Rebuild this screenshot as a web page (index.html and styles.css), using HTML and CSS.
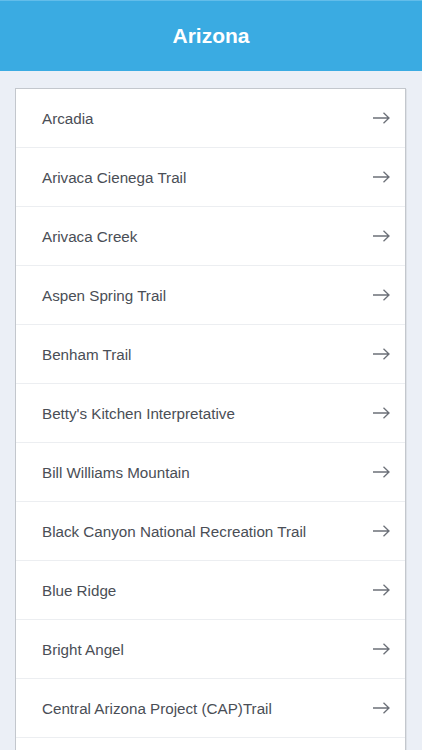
FILE: index.html
```html
<!DOCTYPE html>
<html>
<head>
<meta charset="utf-8">
<link rel="stylesheet" href="styles.css">
</head>
<body>
<header class="bar"><h1 class="title">Arizona</h1></header>
<main class="card">
  <div class="row"><span class="name">Arcadia</span><svg class="arrow" viewBox="0 0 18 12"><path d="M1 6H17M11.5 0.8L17 6L11.5 11.2"/></svg></div>
  <div class="row"><span class="name">Arivaca Cienega Trail</span><svg class="arrow" viewBox="0 0 18 12"><path d="M1 6H17M11.5 0.8L17 6L11.5 11.2"/></svg></div>
  <div class="row"><span class="name">Arivaca Creek</span><svg class="arrow" viewBox="0 0 18 12"><path d="M1 6H17M11.5 0.8L17 6L11.5 11.2"/></svg></div>
  <div class="row"><span class="name">Aspen Spring Trail</span><svg class="arrow" viewBox="0 0 18 12"><path d="M1 6H17M11.5 0.8L17 6L11.5 11.2"/></svg></div>
  <div class="row"><span class="name">Benham Trail</span><svg class="arrow" viewBox="0 0 18 12"><path d="M1 6H17M11.5 0.8L17 6L11.5 11.2"/></svg></div>
  <div class="row"><span class="name">Betty's Kitchen Interpretative</span><svg class="arrow" viewBox="0 0 18 12"><path d="M1 6H17M11.5 0.8L17 6L11.5 11.2"/></svg></div>
  <div class="row"><span class="name">Bill Williams Mountain</span><svg class="arrow" viewBox="0 0 18 12"><path d="M1 6H17M11.5 0.8L17 6L11.5 11.2"/></svg></div>
  <div class="row"><span class="name">Black Canyon National Recreation Trail</span><svg class="arrow" viewBox="0 0 18 12"><path d="M1 6H17M11.5 0.8L17 6L11.5 11.2"/></svg></div>
  <div class="row"><span class="name">Blue Ridge</span><svg class="arrow" viewBox="0 0 18 12"><path d="M1 6H17M11.5 0.8L17 6L11.5 11.2"/></svg></div>
  <div class="row"><span class="name">Bright Angel</span><svg class="arrow" viewBox="0 0 18 12"><path d="M1 6H17M11.5 0.8L17 6L11.5 11.2"/></svg></div>
  <div class="row"><span class="name">Central Arizona Project (CAP)Trail</span><svg class="arrow" viewBox="0 0 18 12"><path d="M1 6H17M11.5 0.8L17 6L11.5 11.2"/></svg></div>
  <div class="row"></div>
</main>
</body>
</html>
```
FILE: styles.css
```css
html, body {
  margin: 0;
  padding: 0;
  background: #ebeff6;
  font-family: "Liberation Sans", Arial, sans-serif;
  overflow: hidden;
  height: 750px;
}
.bar {
  height: 70px;
  background: #3aabe2;
  border-top: 1px solid #62bdea;
  display: flex;
  align-items: center;
  justify-content: center;
}
.title {
  margin: 0;
  color: #ffffff;
  font-size: 21px;
  font-weight: bold;
  line-height: 1;
  padding-bottom: 2px;
}
.card {
  margin: 17px 16px 0 15px;
  background: #ffffff;
  border: 1px solid #c3c7cd;
  box-shadow: 1px 1px 0 #dde1e7;
}
.row {
  height: 58px;
  border-bottom: 1px solid #eceef1;
  display: flex;
  align-items: center;
  justify-content: space-between;
  padding: 0 15px 0 26px;
}
.name {
  font-size: 15.2px;
  color: #4a4e56;
}
.arrow {
  width: 18px;
  height: 12px;
  fill: none;
  stroke: #6c7078;
  stroke-width: 1.3;
}
```
